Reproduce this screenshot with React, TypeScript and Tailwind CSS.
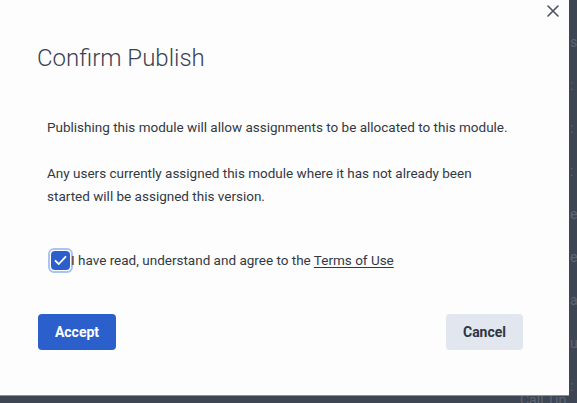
import React from "react";

export default function App() {
  const bgRows = ["s,", ": I", ": I", ": I", "er", "er", "a", "ul", ": I"];
  return (
    <div
      className="relative w-[577px] h-[403px] overflow-hidden bg-[#3e4553]"
      style={{ fontFamily: "Roboto, 'Liberation Sans', sans-serif" }}
    >
      {/* dimmed background page */}
      <div className="flex flex-col pl-[570px] pt-[34px] gap-[27px] text-[14px] leading-[16px] text-[#5d6575]">
        {bgRows.map((t, i) => (
          <div key={i} className="whitespace-nowrap">{t}</div>
        ))}
      </div>
      <div className="absolute left-[520px] top-[392px] text-[14px] leading-[16px] text-[#5d6575] whitespace-nowrap">
        Call Tip
      </div>

      {/* dialog */}
      <div className="absolute left-0 top-0 w-[569px] h-[396px] bg-[#fdfdfd] border-b border-[#8d929c]">
        <button className="absolute left-[546px] top-[4px] w-[13px] h-[13px] flex items-center justify-center">
          <svg width="12" height="12" viewBox="0 0 12 12">
            <path d="M1 1L11 11M11 1L1 11" stroke="#4b5261" strokeWidth="1.6" strokeLinecap="round" />
          </svg>
        </button>

        <div className="pl-[38px] pr-[46px] pt-[43px]">
          <h1 className="text-[24px] leading-[30px] font-light text-[#3a4252] -ml-[1px]">Confirm Publish</h1>

          <div className="pl-[9px] text-[13.5px] leading-[23px] text-[#333944]">
            <p className="mt-[43px] whitespace-nowrap">Publishing this module will allow assignments to be allocated to this module.</p>
            <p className="mt-[23px] w-[440px]">
              Any users currently assigned this module where it has not already been started will be assigned this version.
            </p>

            <label className="mt-[39px] flex items-center h-[26px]">
              <span className="ml-[1px] w-[25px] h-[25px] rounded-[6px] bg-[#a9c3f3] flex items-center justify-center shrink-0">
                <span className="w-[21px] h-[21px] rounded-[4px] bg-white flex items-center justify-center">
                  <span className="w-[19px] h-[19px] rounded-[4px] bg-[#2d5fcc] flex items-center justify-center">
                    <svg width="13" height="11" viewBox="0 0 13 11">
                      <path d="M1.5 5.8L4.8 9L11.5 1.8" fill="none" stroke="#ffffff" strokeWidth="1.8" strokeLinecap="round" strokeLinejoin="round" />
                    </svg>
                  </span>
                </span>
              </span>
              <span className="-ml-[2px] whitespace-nowrap">
                I have read, understand and agree to the <span className="underline underline-offset-2">Terms of Use</span>
              </span>
            </label>
          </div>

          <div className="mt-[41px] flex justify-between">
            <button className="w-[78px] h-[36px] rounded-[4px] bg-[#2b5fcb] text-white text-[14px] font-bold">
              Accept
            </button>
            <button className="w-[77px] h-[36px] rounded-[4px] bg-[#e2e6ee] text-[#2f3542] text-[14px] font-bold">
              Cancel
            </button>
          </div>
        </div>
      </div>
    </div>
  );
}
